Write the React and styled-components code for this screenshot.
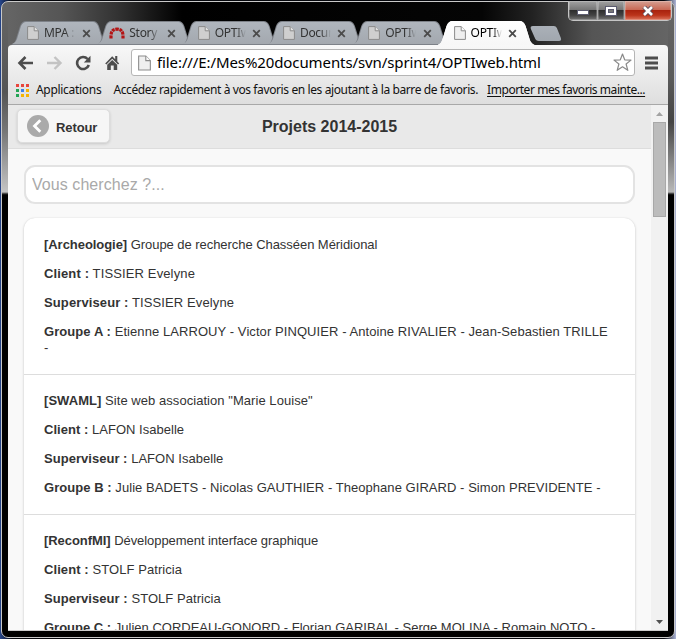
import React from "react";
import styled, { createGlobalStyle } from "styled-components";

const GlobalStyle = createGlobalStyle`
  *, *::before, *::after { box-sizing: border-box; }
  body { margin: 0; background: #0b0b10; overflow: hidden; }
`;

const Desktop = styled.div`
  width: 676px;
  height: 639px;
  overflow: hidden;
  background: linear-gradient(90deg, #26468c 0, #05070c 12px, #05070c 664px, #aeb6d8 676px);
`;

const Window = styled.div`
  width: 674px;
  height: 637px;
  margin: 1px 1px 0;
  padding: 0 6px 6px;
  border: 1px solid #c9c9c9;
  border-radius: 7px;
  display: flex;
  flex-direction: column;
  font-family: "Noto Sans", "Open Sans", sans-serif;
  color: #111;
  background:
    linear-gradient(180deg, #666 0, #555 90px, #777 130px, #c4c4c4 190px, #222 192px, #000 193px) 0 0 / 6px 100% no-repeat,
    linear-gradient(180deg, #666 0, #5a5a5a 75px, #444 120px, #b8b8b8 190px, #222 192px, #000 193px) 100% 0 / 6px 100% no-repeat,
    linear-gradient(90deg, #666 0, #555 60px, #333 115px, #000 180px, #050505 480px, #222 530px, #555 590px, #666 674px) 0 0 / 100% 60px no-repeat,
    #000;
`;

const TitleBar = styled.div`
  height: 43px;
  flex: none;
  display: flex;
  align-items: flex-end;
  padding-left: 3px;
`;

const Tab = styled.div`
  position: relative;
  isolation: isolate;
  flex: none;
  width: 97px;
  height: 24px;
  margin-right: -11.7px;
  display: flex;
  align-items: center;
  padding-left: ${(p) => (p.$arch ? 13 : 16)}px;
  z-index: ${(p) => (p.$active ? 2 : 1)};
  &::before, &::after {
    content: "";
    position: absolute;
    inset: 0;
    z-index: -1;
    clip-path: path("M0 24 C3 23 4 21 5 18 L9 5 Q11 0 15 0 H82 Q86 0 88 5 L92 18 Q93 22 97 24 Z");
    background: ${(p) => (p.$active ? "#fff" : "#7d8188")};
  }
  &::after {
    background: ${(p) => (p.$active ? "linear-gradient(#fff, #f7f7f7)" : "linear-gradient(#b0b6be, #a3a8ae)")};
    clip-path: ${(p) =>
      p.$active
        ? 'path("M0 24 C3 23 4 21 5 18 L9 5 Q11 0 15 0 H82 Q86 0 88 5 L92 18 Q93 22 97 24 Z")'
        : 'path("M1 23 C4 22 5 20 6 18 L10 5 Q12 1 15 1 H82 Q85 1 87 5 L91 18 Q92 22 95 23 Z")'};
  }
`;

const TabTitle = styled.span`
  width: 34px;
  margin-left: ${(p) => p.$gap}px;
  white-space: nowrap;
  font-size: 12px;
  line-height: 18px;
  letter-spacing: -0.3px;
  color: ${(p) => (p.$active ? "#000" : "#333")};
  mask-image: linear-gradient(90deg, #000 21px, transparent 31px);
`;

const TabClose = styled.svg`
  width: 9px;
  height: 9px;
  margin-left: 3.5px;
`;

const NewTab = styled.div`
  flex: none;
  width: 32px;
  height: 15px;
  margin: 0 0 4px 7px;
  clip-path: path("M4 0 H24 Q26 0 27 2 L31 12 Q32 15 29 15 H9 Q6 15 5 12 L1 3 Q0 0 3 0 Z");
  background: linear-gradient(#aab0b8, #a1a7ae);
`;

const Controls = styled.div`
  display: flex;
  align-self: flex-start;
  margin: -1px -4px 0 auto;
  height: 20px;
  border: 1px solid #c5c5c5;
  border-top: 0;
  border-radius: 0 0 5px 5px;
  overflow: hidden;
`;

const Control = styled.div`
  width: ${(p) => p.$width}px;
  display: grid;
  place-items: center;
  border-right: ${(p) => (p.$close ? "0" : "1px solid #aaa")};
  box-shadow: inset 0 0 0 1px rgba(255, 255, 255, 0.22);
  background: ${(p) =>
    p.$close
      ? "linear-gradient(#d5a093 0, #c96a56 45%, #a9230e 50%, #bb341b 75%, #dc765e 100%)"
      : "linear-gradient(#a2a2a2 0, #777 45%, #2e2e2e 50%, #434343 75%, #777 100%)"};
`;

const Chrome = styled.div`
  flex: none;
  height: 60px;
  border-radius: 4px 4px 0 0;
  border-bottom: 1px solid #a8a8a8;
  background: linear-gradient(#f8f8f8, #dedede);
`;

const NavBar = styled.div`
  height: 34px;
  display: flex;
  align-items: center;
  padding: 1px 10px 0 9px;
`;

const NavIcon = styled.svg`
  flex: none;
  width: 17px;
  height: 16px;
  margin-right: ${(p) => p.$gap}px;
`;

const AddressBar = styled.div`
  flex: 1;
  height: 27px;
  display: flex;
  align-items: center;
  padding: 0 2px 0 6px;
  border: 1px solid #b5b5b5;
  border-radius: 3px;
  background: #fff;
`;

const Address = styled.span`
  flex: 1;
  margin: -2px 0 0 6px;
  white-space: nowrap;
  color: #000;
  font-size: 15px;
  line-height: 24px;
  letter-spacing: -0.1px;
`;

const Bookmarks = styled.div`
  height: 22px;
  display: flex;
  align-items: center;
  padding-left: 8px;
  font-size: 12px;
  line-height: 18px;
  white-space: nowrap;
`;

const Bookmark = styled.span`
  margin-left: ${(p) => p.$gap}px;
  letter-spacing: ${(p) => p.$tracking}px;
  text-decoration: ${(p) => (p.$link ? "underline" : "none")};
  text-underline-offset: 2px;
`;

const Viewport = styled.div`
  flex: 1;
  min-height: 0;
  display: flex;
  border-bottom: 1px solid #ccc;
  background: #f9f9f9;
  font-family: "Liberation Sans", Arial, sans-serif;
  color: #333;
`;

const Page = styled.main`
  flex: 1;
  min-width: 0;
  overflow: hidden;
`;

const Header = styled.header`
  height: 44px;
  display: grid;
  grid-template-columns: 93px 1fr 93px;
  align-items: center;
  padding: 0 9px;
  background: #e9e9e9;
  border-bottom: 1px solid #ddd;
`;

const BackButton = styled.button`
  height: 34px;
  margin: -2px 0 0;
  padding: 0 0 0 9px;
  display: flex;
  align-items: center;
  gap: 7px;
  border: 1px solid #ddd;
  border-radius: 5px;
  background: #f6f6f6;
  box-shadow: 0 1px 3px rgba(0, 0, 0, 0.15);
  font: bold 13px/16px "Liberation Sans", Arial, sans-serif;
  letter-spacing: -0.1px;
  color: #333;
`;

const BackLabel = styled.span`
  padding-top: 4px;
`;

const PageTitle = styled.h1`
  margin: 0;
  text-align: center;
  font-size: 16px;
  line-height: 20px;
`;

const Search = styled.input`
  display: block;
  width: 611px;
  height: 39px;
  margin: 16px 16px 14px;
  padding: 0 6px;
  border: 2px solid #e3e3e3;
  border-radius: 11px;
  background: #fff;
  font: 16px "Liberation Sans", Arial, sans-serif;
  letter-spacing: 0.06px;
  &::placeholder { color: #a9a9a9; opacity: 1; }
`;

const ProjectList = styled.ul`
  margin: 0 16px;
  padding: 1px 0 0;
  list-style: none;
  border-radius: 11px;
  background: #fff;
  box-shadow: 0 0 1px rgba(0, 0, 0, 0.12), 0 1px 3px rgba(0, 0, 0, 0.18);
`;

const Project = styled.li`
  padding: 18px 25px 18px 20px;
  & + & { border-top: 1px solid #ddd; }
`;

const Line = styled.p`
  margin: 0 0 13px;
  font-size: 13px;
  line-height: 16px;
  letter-spacing: ${(p) => p.$tracking ?? 0}px;
  &:last-child { margin: 0; }
`;

const Scrollbar = styled.div`
  width: 17px;
  display: flex;
  flex-direction: column;
  align-items: center;
  background: #f1f1f1;
`;

const Thumb = styled.div`
  width: 13px;
  height: 95px;
  margin: 5px 0 auto;
  border: 1px solid #a8a8a8;
  background: #bcbcbc;
`;

const Arrow = styled.svg`
  width: 7px;
  height: 4px;
  margin: ${(p) => (p.$down ? "0 0 6px" : "7px 0 1px")};
`;

function PageIcon({ large, muted }) {
  return (
    <svg width={large ? 13 : 12} height={large ? 16 : 14} viewBox="0 0 12 14">
      <path d="M.6 .6H7.2L11.4 4.8V13.4H.6Z" fill={muted ? "#cfcfcf" : "#efefef"} stroke="#8b8b8b" />
      <path d="M7.2 .6V4.8H11.4" fill={muted ? "#e2e2e2" : "#fafafa"} stroke="#8b8b8b" />
    </svg>
  );
}

function ArchIcon() {
  return (
    <svg width="16" height="14" viewBox="0 0 16 14">
      <path d="M2 12.4V9.5Q2.2 3.2 8 3.2T14 9.5V12.4" fill="none" stroke="#b41414" strokeWidth="3.2" strokeDasharray="3 .7" />
    </svg>
  );
}

const tabs = [
  { title: "MPA :" },
  { title: "Story :", arch: true },
  { title: "OPTIw" },
  { title: "Docum" },
  { title: "OPTIw" },
  { title: "OPTIw", active: true },
];

const projects = [
  { code: "Archeologie", name: "Groupe de recherche Chasséen Méridional", person: "TISSIER Evelyne", group: "A", members: ["Etienne LARROUY", "Victor PINQUIER", "Antoine RIVALIER", "Jean-Sebastien TRILLE"], tracking: [-0.05, 0.13, 0.11, 0.075] },
  { code: "SWAML", name: 'Site web association "Marie Louise"', person: "LAFON Isabelle", group: "B", members: ["Julie BADETS", "Nicolas GAUTHIER", "Theophane GIRARD", "Simon PREVIDENTE"], tracking: [0.05, 0.03, 0.03, 0.05] },
  { code: "ReconfMI", name: "Développement interface graphique", person: "STOLF Patricia", group: "C", members: ["Julien CORDEAU-GONORD", "Florian GARIBAL", "Serge MOLINA", "Romain NOTO"], tracking: [-0.06, 0.08, 0.05, 0] },
];

const appColors = ["#e8453c", "#e8453c", "#e8453c", "#23a455", "#3b82e8", "#f5b400", "#23a455", "#f5b400", "#f5b400"];

export default function App() {
  return (
    <Desktop>
      <GlobalStyle />
      <Window>
        <TitleBar>
          {tabs.map((t, i) => (
            <Tab key={i} $active={t.active} $arch={t.arch}>
              {t.arch ? <ArchIcon /> : <PageIcon muted={!t.active} />}
              <TabTitle $gap={t.arch ? 4 : 5} $active={t.active}>{t.title}</TabTitle>
              <TabClose viewBox="0 0 9 9">
                <path d="M1.2 1.2L7.8 7.8M7.8 1.2L1.2 7.8" stroke="#4b4b4b" strokeWidth="1.8" />
              </TabClose>
            </Tab>
          ))}
          <NewTab />
          <Controls>
            <Control $width={29}>
              <svg width="12" height="9"><rect x=".5" y="4.5" width="11" height="4" fill="#fff" stroke="#5c5c70" /></svg>
            </Control>
            <Control $width={27}>
              <svg width="12" height="10"><rect x=".5" y=".5" width="11" height="9" fill="#fff" stroke="#5c5c70" /><rect x="3.5" y="3.5" width="5" height="3" fill="#777" stroke="#5c5c70" /></svg>
            </Control>
            <Control $width={46} $close>
              <svg width="12" height="10" viewBox="0 0 12 10">
                <path d="M2 1L10 9M10 1L2 9" stroke="#5b4a58" strokeWidth="4.4" />
                <path d="M2 1L10 9M10 1L2 9" stroke="#fff" strokeWidth="2.6" />
              </svg>
            </Control>
          </Controls>
        </TitleBar>
        <Chrome>
          <NavBar>
            <NavIcon $gap={12} viewBox="0 0 17 16"><path d="M16 8H3M8.5 2L2.5 8L8.5 14" fill="none" stroke="#4d4d4d" strokeWidth="2.6" /></NavIcon>
            <NavIcon $gap={12} viewBox="0 0 17 16"><path d="M1 8H14M8.5 2L14.5 8L8.5 14" fill="none" stroke="#c3c3c3" strokeWidth="2.4" /></NavIcon>
            <NavIcon $gap={12} viewBox="0 0 17 16">
              <path d="M13.8 10A6 6 0 1 1 12.6 4" fill="none" stroke="#4d4d4d" strokeWidth="2.6" />
              <path d="M15.5 .8V7.4H8.8Z" fill="#4d4d4d" />
            </NavIcon>
            <NavIcon $gap={10} viewBox="0 0 17 16">
              <path d="M8.2 1.2L1.2 8.4L2.4 9.4L8.2 3.8L14 9.4L15.2 8.4L13.3 6.4V1H11.2V4.2Z" fill="#4d4d4d" />
              <path d="M8.2 5L3.2 9.8V15H6.8V10.4H9.7V15H13.2V9.8Z" fill="#4d4d4d" />
            </NavIcon>
            <AddressBar>
              <PageIcon large />
              <Address>file:///E:/Mes%20documents/svn/sprint4/OPTIweb.html</Address>
              <svg width="19" height="19" viewBox="0 0 19 19"><path d="M9.5 1L11.7 6.8L18 7.1L13.1 11L14.8 17.3L9.5 13.8L4.2 17.3L5.9 11L1 7.1L7.3 6.8Z" fill="#fff" stroke="#8a8a8a" strokeWidth="1.2" strokeLinejoin="round" /></svg>
            </AddressBar>
            <svg width="23" height="16" viewBox="0 0 23 16"><path d="M10 3H23M10 8H23M10 13H23" stroke="#4d4d4d" strokeWidth="3" /></svg>
          </NavBar>
          <Bookmarks>
            <svg width="13" height="13">
              {appColors.map((c, i) => <rect key={i} x={(i % 3) * 5} y={Math.floor(i / 3) * 5} width="3" height="3" fill={c} />)}
            </svg>
            <Bookmark $gap={7} $tracking={-0.3}>Applications</Bookmark>
            <Bookmark $gap={12} $tracking={-0.39}>Accédez rapidement à vos favoris en les ajoutant à la barre de favoris.</Bookmark>
            <Bookmark $gap={9} $tracking={-0.44} $link>Importer mes favoris mainte...</Bookmark>
          </Bookmarks>
        </Chrome>
        <Viewport>
          <Page>
            <Header>
              <BackButton>
                <svg width="22" height="22"><circle cx="11" cy="11" r="11" fill="#aaa" /><path d="M13.3 5.2L7.5 11L13.3 16.8" fill="none" stroke="#fff" strokeWidth="2.8" /></svg>
                <BackLabel>Retour</BackLabel>
              </BackButton>
              <PageTitle>Projets 2014-2015</PageTitle>
            </Header>
            <Search placeholder="Vous cherchez ?..." />
            <ProjectList>
              {projects.map((p) => (
                <Project key={p.code}>
                  <Line $tracking={p.tracking[0]}><b>[{p.code}]</b> {p.name}</Line>
                  <Line $tracking={p.tracking[1]}><b>Client :</b> {p.person}</Line>
                  <Line $tracking={p.tracking[2]}><b>Superviseur :</b> {p.person}</Line>
                  <Line $tracking={p.tracking[3]}><b>Groupe {p.group} :</b> {p.members.join(" - ")} -</Line>
                </Project>
              ))}
            </ProjectList>
          </Page>
          <Scrollbar>
            <Arrow viewBox="0 0 7 4"><path d="M0 4L3.5 0L7 4Z" fill="#a3a3a3" /></Arrow>
            <Thumb />
            <Arrow $down viewBox="0 0 7 4"><path d="M0 0L3.5 4L7 0Z" fill="#505050" /></Arrow>
          </Scrollbar>
        </Viewport>
      </Window>
    </Desktop>
  );
}
